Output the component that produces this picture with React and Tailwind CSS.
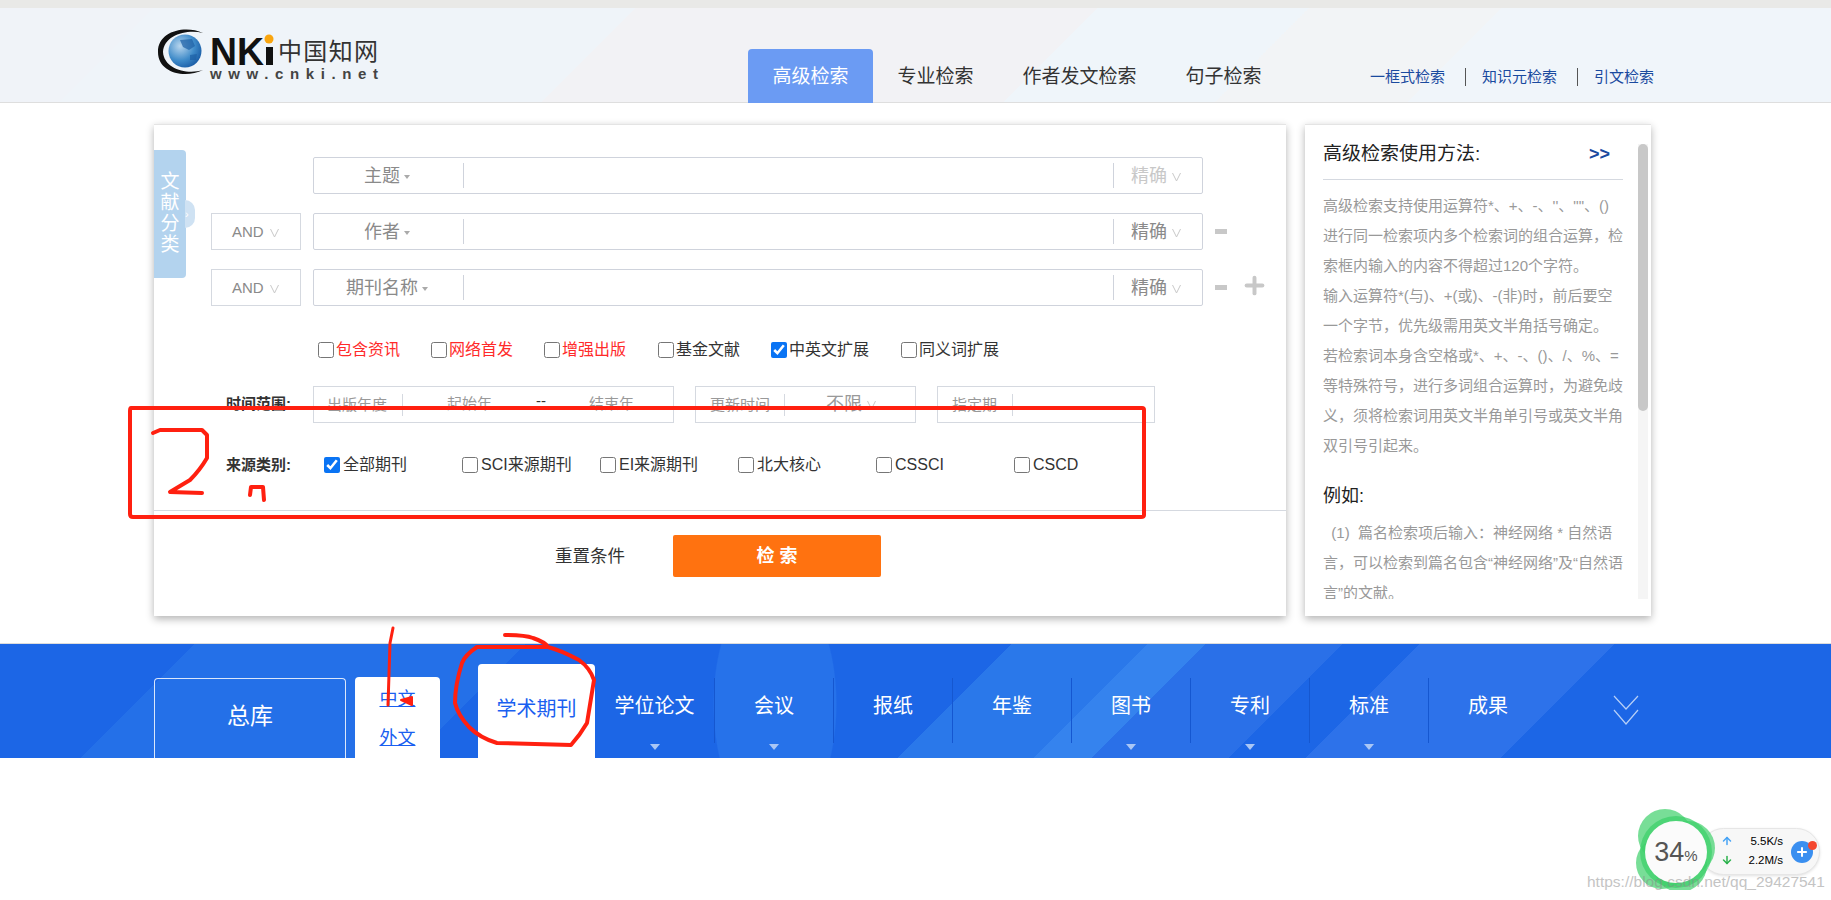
import React from 'react'
import { ArrowUp, ArrowDown, Plus } from 'lucide-react'

const HELP_LINES = [
    '高级检索支持使用运算符*、+、-、\'\'、""、()',
    '进行同一检索项内多个检索词的组合运算\uff0c检',
    '索框内输入的内容不得超过120个字符。',
    '输入运算符*(与)、+(或)、-(非)时\uff0c前后要空',
    '一个字节\uff0c优先级需用英文半角括号确定。',
    '若检索词本身含空格或*、+、-、()、/、%、=',
    '等特殊符号\uff0c进行多词组合运算时\uff0c为避免歧',
    '义\uff0c须将检索词用英文半角单引号或英文半角',
    '双引号引起来。',
]

const EXAMPLE_LINES = [
    '\u00a0\u00a0(1)\u00a0\u00a0篇名检索项后输入\uff1a神经网络 * 自然语',
    '言\uff0c可以检索到篇名包含“神经网络”及“自然语',
    '言”的文献。',
]

const OPTIONS = [
    { text: '包含资讯', red: true, w: 'w-[113px]' },
    { text: '网络首发', red: true, w: 'w-[113px]' },
    { text: '增强出版', red: true, w: 'w-[114px]' },
    { text: '基金文献', w: 'w-[113px]' },
    { text: '中英文扩展', checked: true, w: 'w-[130px]' },
    { text: '同义词扩展', w: 'w-[130px]' },
]

const SOURCES = [
    { text: '全部期刊', checked: true },
    { text: 'SCI来源期刊' },
    { text: 'EI来源期刊' },
    { text: '北大核心' },
    { text: 'CSSCI' },
    { text: 'CSCD' },
]

const NAV = [
    { text: '学位论文', arrow: true, first: true },
    { text: '会议', arrow: true },
    { text: '报纸' },
    { text: '年鉴' },
    { text: '图书', arrow: true },
    { text: '专利', arrow: true },
    { text: '标准', arrow: true },
    { text: '成果' },
]

const Vee = ({ className = '' }) => (
    <svg viewBox="0 0 9 10" className={`w-[9px] h-[10px] ${className}`} fill="none" stroke="currentColor" strokeWidth="1">
        <path d="M0.5 1 L4.5 9 L8.5 1" />
    </svg>
)

const Logo = () => (
    <svg viewBox="155 28 225 56" className="w-[225px] h-[56px]">
        <defs>
            <radialGradient id="globe" cx="0.35" cy="0.35" r="0.8">
                <stop offset="0" stopColor="#b8d6ee" />
                <stop offset="0.55" stopColor="#3f8bc9" />
                <stop offset="1" stopColor="#0f4f9c" />
            </radialGradient>
        </defs>
        <path d="M203 33 C185 25 158 31 158 52 C158 73 185 79 203 70 C187 75 164 69 163 52 C164 35 187 29 203 33 Z" fill="#111" />
        <circle cx="185" cy="51" r="16.5" fill="url(#globe)" />
        <path d="M180 40 L192 39 L195 46 L189 50 L183 47 Z M190 55 L197 54 L196 60 L190 60 Z" fill="#1c5fa5" opacity="0.7" />
        <text x="210" y="65" fontSize="38" fontWeight="700" fontFamily="Liberation Sans" fill="#111" textLength="54" lengthAdjust="spacingAndGlyphs">NK</text>
        <rect x="266" y="47" width="7" height="18" fill="#111" />
        <circle cx="269" cy="39" r="4.5" fill="#f9a50f" />
        <text x="278" y="60" fontSize="24" fontFamily="Noto Sans CJK SC" fill="#333" textLength="100">中国知网</text>
        <text x="210" y="78.5" fontSize="15" fontFamily="Liberation Sans" fontWeight="700" fill="#444" textLength="168">www.cnki.net</text>
    </svg>
)

const Field = ({ label, muted }) => (
    <div className="flex items-center w-[890px] h-[37px] border border-[#cfd3dc] rounded-[2px]">
        <div className="flex items-center justify-center w-[150px] h-[25px] pr-[3px] pt-[2px] border-r border-[#cfd3dc] text-[18px] text-[#8a8a8a]">
            {label}
            <span className="ml-[4px] w-0 h-0 border-x-[3px] border-t-[4px] border-x-transparent border-t-[#aaa]" />
        </div>
        <div className="flex-1" />
        <div className={`flex items-center w-[89px] h-[25px] pl-[17px] pt-[2px] border-l border-[#cfd3dc] text-[18px] ${muted ? 'text-[#c8c8c8]' : 'text-[#8a8a8a]'}`}>
            精确
            <Vee className="ml-[5px] text-[#c8c8c8]" />
        </div>
    </div>
)

const AndBox = () => (
    <div className="flex items-center w-[90px] h-[37px] mr-[12px] pl-[20px] pt-[2px] border border-[#d5d9e0] text-[15px] text-[#8a8a8a]">
        AND
        <Vee className="ml-[6px] text-[#c8c8c8]" />
    </div>
)

const Check = ({ checked }) => (
    <input type="checkbox" defaultChecked={checked} className="w-[16px] h-[16px] m-0 shrink-0 accent-[#0a74f4]" />
)

const SearchForm = () => (
    <div className="relative w-[1132px] h-[492px] bg-white border-t border-[#e4e4e4] shadow-[0_3px_8px_rgba(0,0,0,0.3)]">
        <div className="absolute left-0 top-[25px] flex items-center">
            <div className="w-[32px] h-[128px] pb-[3px] bg-[#b3d3ee] rounded-r-[4px] flex flex-col items-center justify-center text-[19px] leading-[21px] text-white">
                <span>文</span>
                <span>献</span>
                <span>分</span>
                <span>类</span>
            </div>
            <div className="w-[10px] h-[28px] -ml-px bg-[#cfe2f3] rounded-r-full flex items-center text-white text-[11px]">›</div>
        </div>

        <div className="pt-[32px] pl-[57px] flex flex-col gap-[19px]">
            <div className="flex items-center pl-[102px]">
                <Field label="主题" muted />
            </div>
            <div className="flex items-center">
                <AndBox />
                <Field label="作者" />
                <span className="ml-[12px] w-[12px] h-[5px] bg-[#c8c8c8]" />
            </div>
            <div className="flex items-center">
                <AndBox />
                <Field label="期刊名称" />
                <span className="ml-[12px] w-[12px] h-[5px] bg-[#c8c8c8]" />
                <Plus size={27} strokeWidth={3.5} className="ml-[14px] -mt-[5px] text-[#c8c8c8]" />
            </div>
        </div>

        <div className="flex items-center h-[24px] mt-[32px] pl-[164px] text-[16px]">
            {OPTIONS.map((o) => (
                <label key={o.text} className={`flex items-center gap-[2px] ${o.w} ${o.red ? 'text-[#ff2a2a]' : 'text-[#333]'}`}>
                    <Check checked={o.checked} />
                    <span>{o.text}</span>
                </label>
            ))}
        </div>

        <div className="flex items-center mt-[24px] pl-[72px] text-[15px] text-[#999]">
            <span className="w-[87px] font-bold text-[#333]">时间范围:</span>
            <div className="flex items-center w-[361px] h-[37px] border border-[#d5d9e0]">
                <span className="w-[89px] pl-[13px] border-r border-[#d5d9e0] leading-[22px]">出版年度</span>
                <span className="ml-[44px] w-[45px]">起始年</span>
                <span className="ml-[44px] w-[10px] -mt-[8px] text-[#333] leading-none">--</span>
                <span className="ml-[43px]">结束年</span>
            </div>
            <div className="flex items-center w-[221px] h-[37px] ml-[21px] border border-[#d5d9e0]">
                <span className="w-[89px] pl-[14px] border-r border-[#d5d9e0] leading-[22px]">更新时间</span>
                <span className="ml-[41px] text-[18px]">不限</span>
                <Vee className="ml-[5px] text-[#c8c8c8]" />
            </div>
            <div className="flex items-center w-[218px] h-[37px] ml-[21px] border border-[#d5d9e0]">
                <span className="w-[75px] pl-[14px] border-r border-[#d5d9e0] leading-[22px]">指定期</span>
            </div>
        </div>

        <div className="flex items-center h-[24px] mt-[30px] pl-[72px] text-[16px] text-[#333]">
            <span className="w-[98px] text-[15px] font-bold">来源类别:</span>
            {SOURCES.map((s) => (
                <label key={s.text} className="flex items-center gap-[3px] w-[138px]">
                    <Check checked={s.checked} />
                    <span>{s.text}</span>
                </label>
            ))}
        </div>

        <div className="h-px mt-[33px] bg-[#d5d9e0]" />

        <div className="flex items-center mt-[24px] pl-[401px]">
            <span className="w-[72px] text-[17.5px] text-[#333]">重置条件</span>
            <button className="ml-[46px] w-[208px] h-[42px] rounded-[2px] bg-[#ff7210] text-[18px] font-bold text-white">检 索</button>
        </div>
    </div>
)

const HelpPanel = () => (
    <div className="flex w-[346px] h-[492px] pl-[18px] pt-[19px] bg-white border-t border-[#e4e4e4] shadow-[0_3px_8px_rgba(0,0,0,0.3)]">
        <div className="w-[300px] h-[455px] overflow-hidden text-[15px] leading-[30px] text-[#999] whitespace-nowrap">
            <div className="flex justify-between h-[36px] pb-[15px] border-b border-[#d5d9e0] leading-[20px]">
                <span className="text-[19px] text-[#222]">高级检索使用方法:</span>
                <span className="mr-[13px] text-[18px] font-bold text-[#1a4a9f]">&gt;&gt;</span>
            </div>
            <div className="mt-[11px]">
                {HELP_LINES.map((line) => (
                    <div key={line}>{line}</div>
                ))}
            </div>
            <div className="mt-[20px] mb-[7px] text-[18px] text-[#222]">例如:</div>
            {EXAMPLE_LINES.map((line) => (
                <div key={line}>{line}</div>
            ))}
        </div>
        <div className="ml-[15px] w-[10px] h-[455px] bg-[#f5f5f5]">
            <div className="h-[267px] rounded-full bg-[#c8c8c8]" />
        </div>
    </div>
)

const DatabaseBar = () => (
    <div className="flex items-end h-[115px] pl-[154px] border-t border-[#dcdcdc] bg-[radial-gradient(ellipse_62px_125px_at_775px_60px,#2672ea_98%,transparent_100%),linear-gradient(135deg,#1c66e6_0%,#1c66e6_10%,#2470e8_10%,#2470e8_27%,#1c66e6_27%,#1c66e6_52%,#2a78ea_52%,#2a78ea_59%,#3583ee_59%,#3583ee_62%,#2a70e8_62%,#2a70e8_69%,#1c66e6_69%,#1c66e6_73%,#2d72ea_73%,#2d72ea_83%,#1c66e6_83%)]">
        <div className="flex items-center justify-center w-[192px] h-[80px] pb-[4px] border border-b-0 border-[#dbe7fb] rounded-t-[4px] text-[23px] text-white">总库</div>
        <div className="flex flex-col items-center w-[85px] h-[81px] ml-[9px] pt-[3px] rounded-t-[4px] bg-white text-[18px] leading-[39px] text-[#1a5ff0] underline">
            <span>中文</span>
            <span>外文</span>
        </div>
        <div className="flex items-center justify-center w-[117px] h-[94px] ml-[38px] pb-[4px] rounded-t-[4px] bg-white text-[20px] text-[#1a5ff0]">学术期刊</div>
        {NAV.map((item) => (
            <div key={item.text} className="flex flex-col items-center w-[119px] h-[80px]">
                <div className={`w-full h-[65px] pt-[14px] text-center text-[20px] leading-[28px] text-white ${item.first ? '' : 'border-l border-[#1557d0]'}`}>
                    {item.text}
                </div>
                {item.arrow && <span className="mt-[1px] w-0 h-0 border-x-[5px] border-t-[6px] border-x-transparent border-t-[#a9c6f5]" />}
            </div>
        ))}
        <svg viewBox="0 0 26 30" className="w-[26px] h-[30px] ml-[66px] mb-[33px] text-[#b7d0f7]" fill="none" stroke="currentColor" strokeWidth="1.2">
            <path d="M1 1 L13 14 L25 1 M1 15 L13 29 L25 15" />
        </svg>
    </div>
)

const SpeedWidget = () => (
    <div className="absolute left-[1630px] top-[800px] w-[195px] h-[90px]">
        <div className="absolute left-[70px] top-[28px] w-[120px] h-[47px] rounded-full bg-[#f7f7f7] border border-[#e6e6e6] shadow-[0_1px_3px_rgba(0,0,0,0.12)]">
            <div className="flex flex-col gap-[3px] pt-[4px] pl-[20px] text-[11.5px] leading-[16px] text-black font-['Liberation_Sans']">
                <div className="flex items-center w-[62px] justify-between">
                    <ArrowUp size={12} strokeWidth={3} className="text-[#46a3f5]" />
                    <span>5.5K/s</span>
                </div>
                <div className="flex items-center w-[62px] justify-between">
                    <ArrowDown size={12} strokeWidth={3} className="text-[#2bb24c]" />
                    <span>2.2M/s</span>
                </div>
            </div>
            <div className="absolute left-[90px] top-[12px] flex items-center justify-center w-[22px] h-[22px] rounded-full bg-[#3a8ff0]">
                <Plus size={14} strokeWidth={3.5} className="text-white" />
            </div>
            <div className="absolute left-[107px] top-[12px] w-[9px] h-[9px] rounded-full bg-[#f4472e]" />
        </div>
        <svg viewBox="1630 800 90 90" className="absolute left-0 top-0 w-[90px] h-[90px]">
            <circle cx="1676" cy="852" r="36" fill="#6fdc92" />
            <g fill="#3fd06b" fillOpacity="0.7">
                <circle cx="1665" cy="836" r="27" />
                <circle cx="1688" cy="848" r="27" />
                <circle cx="1662" cy="863" r="26" />
                <circle cx="1680" cy="865" r="27" />
            </g>
            <circle cx="1676" cy="852" r="31" fill="#fbfbfb" />
        </svg>
        <div className="absolute left-[16px] top-[34px] w-[60px] text-center font-['Liberation_Sans'] text-[#555] leading-[36px]">
            <span className="text-[27px]">34</span>
            <span className="text-[15px]">%</span>
        </div>
    </div>
)

const Annotations = () => (
    <svg viewBox="0 0 1831 900" className="absolute left-0 top-0 w-[1831px] h-[900px] pointer-events-none" fill="none" stroke="#ff2010" strokeWidth="4" strokeLinecap="round" strokeLinejoin="round">
        <path d="M131 408 L1142 408 Q1144 408 1144 410 L1144 515 Q1144 517 1141 517 L133 517 Q130 517 130 514 L130 411 Q130 408 131 408 Z" />
        <path d="M153 433 L160 430 L202 430 L207 435 L207 458 Q200 470 190 480 L170 492 L202 493" />
        <path d="M250 495 L251 487 L263 487 L264 500" />
        <path d="M393 628 L390 643 L388 705" strokeWidth="3" />
        <path d="M401 700 L412 697 L412 705 Z" fill="#ff2010" strokeWidth="2" />
        <path d="M505 635 Q525 635 533 638 Q545 642 548 647 L477 647 Q465 655 462 663 Q455 685 455 703 Q458 715 469 727 Q480 738 497 743 L571 745 Q580 735 587 723 L594 680 Q590 668 579 660 Q560 650 548 647" />
    </svg>
)

export default function App() {
    return (
        <div className="relative w-[1831px] h-[900px] overflow-hidden bg-white font-['Liberation_Sans','Noto_Sans_CJK_SC',sans-serif]">
            <div className="h-2 bg-[#e9e9e7]" />
            <header className="flex items-end h-[95px] pl-[154px] border-b border-[#dedede] bg-[linear-gradient(135deg,#f0f3f8_0%,#f0f3f8_8%,#eff4f9_8%,#eff4f9_33%,#f2f2f5_33%,#f2f2f5_57%,#eff5fa_57%,#eff5fa_68%,#f2f4f6_68%,#f2f4f6_78%,#f0f5fa_78%)]">
                <div className="self-start w-[594px] pt-[20px] pl-[1px]">
                    <Logo />
                </div>
                <nav className="flex items-center h-[54px] -mb-px pt-[2px] text-[19px] text-[#333]">
                    <a className="flex items-center justify-center w-[125px] h-[54px] -mt-[2px] pt-[2px] rounded-t-[4px] bg-[#6b9bf3] text-white">高级检索</a>
                    <a className="px-[24.5px]">专业检索</a>
                    <a className="px-[24.5px]">作者发文检索</a>
                    <a className="px-[24.5px]">句子检索</a>
                </nav>
                <div className="flex items-center h-[18px] mb-[16px] ml-[84px] text-[15px] text-[#1a4a9f]">
                    <a className="pr-[20px]">一框式检索</a>
                    <a className="pl-[16px] pr-[20px] border-x border-[#555] leading-[18px]">知识元检索</a>
                    <a className="pl-[16px]">引文检索</a>
                </div>
            </header>

            <main className="flex gap-[19px] h-[540px] pt-[21px] pl-[154px]">
                <SearchForm />
                <HelpPanel />
            </main>

            <DatabaseBar />

            <SpeedWidget />
            <span className="absolute left-[1587px] top-[873px] text-[15.5px] leading-[18px] text-[#8a8a8a] opacity-50 whitespace-nowrap font-['Liberation_Sans']">https://blog.csdn.net/qq_29427541</span>
            <Annotations />
        </div>
    )
}
